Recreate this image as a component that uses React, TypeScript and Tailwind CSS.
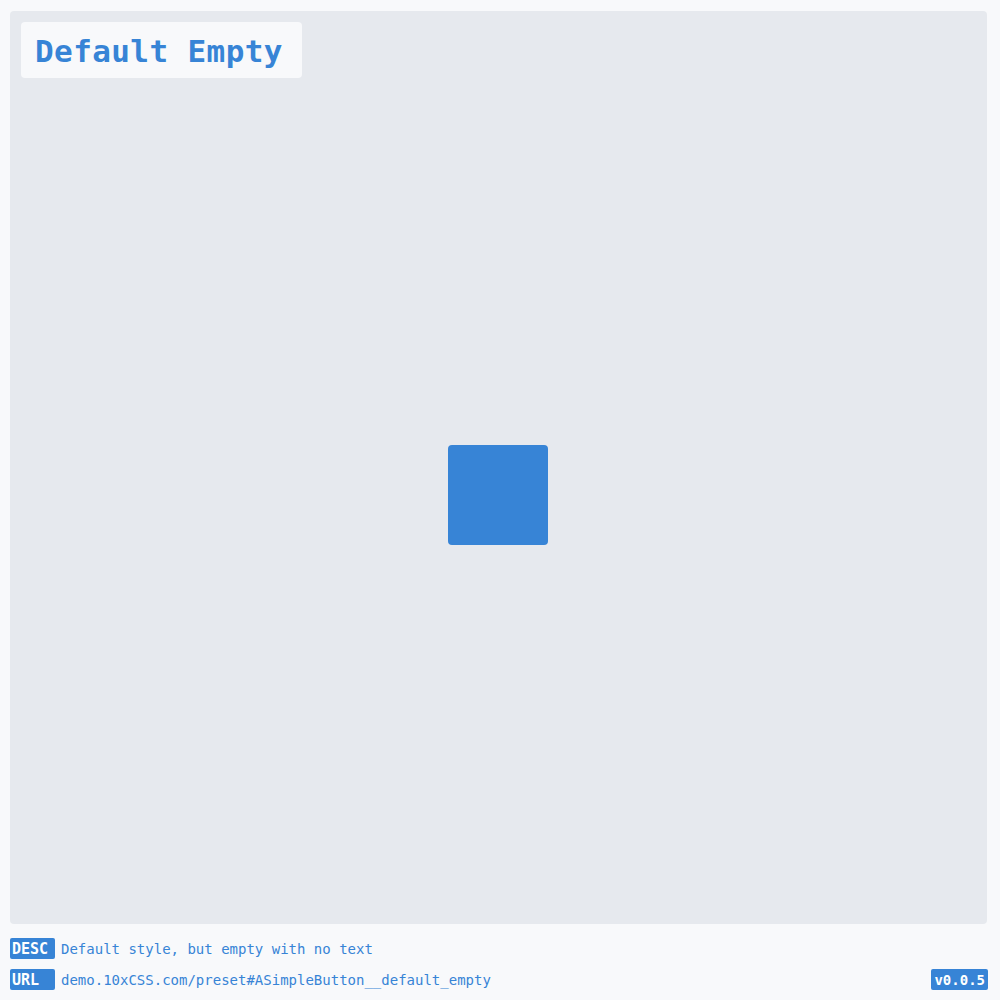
export default function App() {
  const mono = { fontFamily: '"DejaVu Sans Mono", "Liberation Mono", monospace' };
  return (
    <div className="w-[1000px] h-[1000px] bg-[#f8f9fb] flex flex-col" style={mono}>
      <div className="mx-[10px] mt-[11px] w-[977px] h-[913px] bg-[#e6e9ee] rounded-[4px] flex flex-col">
        <div className="ml-[11px] mt-[11px] w-[281px] h-[56px] bg-[#f8f9fb] rounded-[4px] flex items-center px-[14px]">
          <span className="text-[31px] font-bold text-[#3784d6] tracking-[0.4px] pt-[2px]">Default Empty</span>
        </div>
        <div className="flex-1 flex items-center justify-center pb-[12px] pr-[2px]">
          <button className="w-[100px] h-[100px] bg-[#3784d6] rounded-[4px]"></button>
        </div>
      </div>
      <div className="mx-[10px] mt-[14px] flex items-center gap-[6px] h-[21px]">
        <span className="w-[45px] h-[21px] bg-[#3784d6] text-white font-bold text-[15px] leading-[21px] pl-[2px] pt-[1px] rounded-[2px]">DESC</span>
        <span className="text-[14px] text-[#3784d6] pt-[2px]">Default style, but empty with no text</span>
      </div>
      <div className="mx-[10px] mt-[10px] flex items-center gap-[6px] h-[21px]">
        <span className="w-[45px] h-[21px] bg-[#3784d6] text-white font-bold text-[15px] leading-[21px] pl-[2px] pt-[1px] rounded-[2px]">URL</span>
        <span className="text-[14px] text-[#3784d6] pt-[2px]">demo.10xCSS.com/preset#ASimpleButton__default_empty</span>
        <span className="ml-auto mr-[2px] h-[21px] px-[3px] bg-[#3784d6] text-white font-bold text-[14px] leading-[21px] pt-[1px] rounded-[2px]">v0.0.5</span>
      </div>
    </div>
  );
}
